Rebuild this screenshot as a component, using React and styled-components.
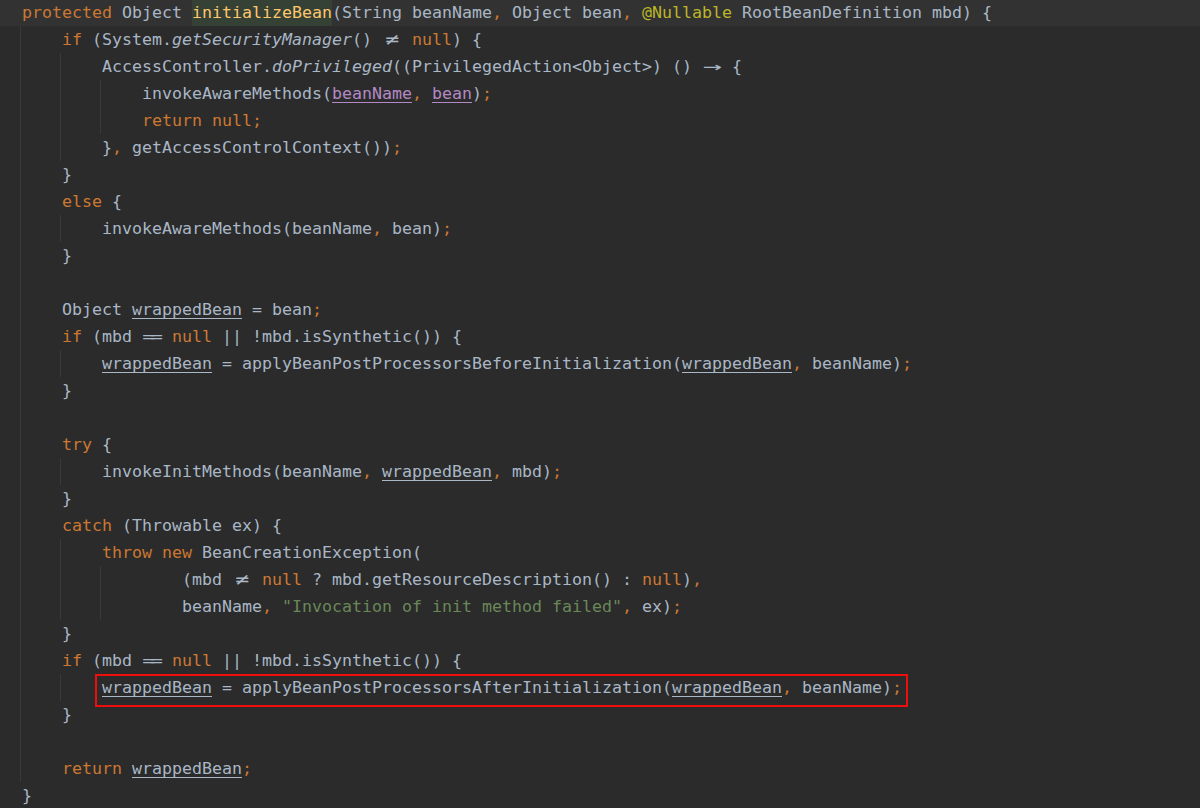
import React from 'react'
import styled, { createGlobalStyle } from 'styled-components'

const GlobalStyle = createGlobalStyle`
	html, body {
		margin: 0;
		background: #2b2b2b;
	}
	body { overflow: hidden; }
`

const Editor = styled.div`
	display: flow-root;
	width: 1200px;
	height: 808px;
	overflow: hidden;
	background: #2b2b2b;
	color: #a9b7c6;
	font-family: "DejaVu Sans Mono", "Liberation Mono", monospace;
	font-size: 16.61px;
	font-variant-ligatures: none;
`

const Code = styled.div`
	margin-top: -1px;
`

const Row = styled.div`
	height: 27px;
	line-height: 27px;
	white-space: pre;
	padding-left: ${p => (p.$indent || 0) * 10 + 2}px;
	background: ${p => p.$current ? '#323232' : 'transparent'};
`

// indent guide: a block of lines with a thin line at its left edge
const Block = styled.div`
	margin-left: ${p => p.$at * 10}px;
	box-shadow: inset 1px 0 0 #393939;
`

const Kw = styled.span`color: #cc7832;`
const P = styled.span`color: #cc7832;`
const Ann = styled.span`color: #bbb529;`
const Str = styled.span`color: #6a8759;`
const Fn = styled.span`font-style: italic;`

const Decl = styled.span`
	display: inline-block;
	color: #ffc66d;
	background: #344134;
`

const Local = styled.span`
	text-decoration: underline;
	text-underline-offset: 3px;
	text-decoration-skip-ink: none;
`

const Captured = styled(Local)`
	color: #b389c5;
`

const Lig = styled.span`
	display: inline-block;
	width: 20px;
	text-align: center;
	letter-spacing: ${p => p.$tight ? '-4px' : '0'};
	transform: translateX(${p => p.$tight ? '-2px' : '0'}) scaleX(${p => p.$stretch || 1});
`

const Boxed = styled.span`
	display: inline-block;
	position: relative;
	&::after {
		content: '';
		position: absolute;
		left: -7px;
		right: -6px;
		top: 0;
		bottom: -6px;
		border: 2px solid #f20d0d;
		pointer-events: none;
	}
`

const Ne = () => <Lig $stretch={1.4}>≠</Lig>
const Eq = () => <Lig $tight $stretch={1.3}>==</Lig>
const Arrow = () => <Lig $stretch={1.9}>→</Lig>

const MbdCheck = () => (
	<Row $indent={4}><Kw>if</Kw> (mbd <Eq/> <Kw>null</Kw> || !mbd.isSynthetic()) {'{'}</Row>
)

const Close = () => <Row $indent={4}>{'}'}</Row>

const App = () => (
	<Editor>
		<GlobalStyle/>
		<Code>
			<Row $indent={2} $current><Kw>protected</Kw> Object <Decl>initializeBean</Decl>(String beanName<P>,</P> Object bean<P>,</P> <Ann>@Nullable</Ann> RootBeanDefinition mbd) {'{'}</Row>
			<Block $at={2}>
				<Row $indent={4}><Kw>if</Kw> (System.<Fn>getSecurityManager</Fn>() <Ne/> <Kw>null</Kw>) {'{'}</Row>
				<Block $at={4}>
					<Row $indent={4}>AccessController.<Fn>doPrivileged</Fn>((PrivilegedAction&lt;Object&gt;) () <Arrow/> {'{'}</Row>
					<Block $at={4}>
						<Row $indent={4}>invokeAwareMethods(<Captured>beanName</Captured><P>,</P> <Captured>bean</Captured>)<P>;</P></Row>
						<Row $indent={4}><Kw>return null</Kw><P>;</P></Row>
					</Block>
					<Row $indent={4}>{'}'}<P>,</P> getAccessControlContext())<P>;</P></Row>
				</Block>
				<Close/>
				<Row $indent={4}><Kw>else</Kw> {'{'}</Row>
				<Block $at={4}>
					<Row $indent={4}>invokeAwareMethods(beanName<P>,</P> bean)<P>;</P></Row>
				</Block>
				<Close/>
				<Row/>
				<Row $indent={4}>Object <Local>wrappedBean</Local> = bean<P>;</P></Row>
				<MbdCheck/>
				<Block $at={4}>
					<Row $indent={4}><Local>wrappedBean</Local> = applyBeanPostProcessorsBeforeInitialization(<Local>wrappedBean</Local><P>,</P> beanName)<P>;</P></Row>
				</Block>
				<Close/>
				<Row/>
				<Row $indent={4}><Kw>try</Kw> {'{'}</Row>
				<Block $at={4}>
					<Row $indent={4}>invokeInitMethods(beanName<P>,</P> <Local>wrappedBean</Local><P>,</P> mbd)<P>;</P></Row>
				</Block>
				<Close/>
				<Row $indent={4}><Kw>catch</Kw> (Throwable ex) {'{'}</Row>
				<Block $at={4}>
					<Row $indent={4}><Kw>throw new</Kw> BeanCreationException(</Row>
					<Block $at={4}>
						<Row $indent={8}>(mbd <Ne/> <Kw>null</Kw> ? mbd.getResourceDescription() : <Kw>null</Kw>)<P>,</P></Row>
						<Row $indent={8}>beanName<P>,</P> <Str>"Invocation of init method failed"</Str><P>,</P> ex)<P>;</P></Row>
					</Block>
				</Block>
				<Close/>
				<MbdCheck/>
				<Block $at={4}>
					<Row $indent={4}><Boxed><Local>wrappedBean</Local> = applyBeanPostProcessorsAfterInitialization(<Local>wrappedBean</Local><P>,</P> beanName)<P>;</P></Boxed></Row>
				</Block>
				<Close/>
				<Row/>
				<Row $indent={4}><Kw>return</Kw> <Local>wrappedBean</Local><P>;</P></Row>
			</Block>
			<Row $indent={2}>{'}'}</Row>
		</Code>
	</Editor>
)

export default App
